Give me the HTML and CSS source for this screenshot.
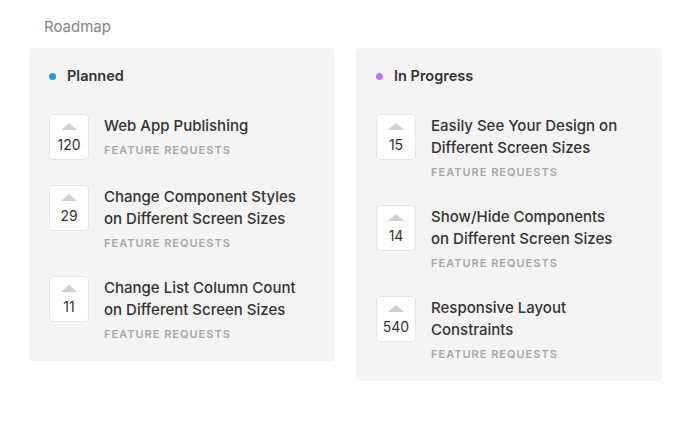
FILE: index.html
```html
<!DOCTYPE html>
<html lang="en">
<head>
    <meta charset="UTF-8">
    <meta name="viewport" content="width=device-width, initial-scale=1.0">
    <title>Roadmap</title>
    <link rel="stylesheet" href="styles.css">
</head>
<body>

    <div class="roadmap">
        <h1 class="roadmap-title">Roadmap</h1>

        <div class="columns">
            <!-- Planned -->
            <div class="column">
                <div class="column-header">
                    <span class="dot dot-planned"></span>
                    <span>Planned</span>
                </div>

                <div class="item">
                    <div class="vote">
                        <span class="arrow"></span>
                        <span class="count">120</span>
                    </div>
                    <div class="item-body">
                        <div class="item-title">Web App Publishing</div>
                        <div class="item-tag">Feature Requests</div>
                    </div>
                </div>

                <div class="item">
                    <div class="vote">
                        <span class="arrow"></span>
                        <span class="count">29</span>
                    </div>
                    <div class="item-body">
                        <div class="item-title">Change Component Styles on Different Screen Sizes</div>
                        <div class="item-tag">Feature Requests</div>
                    </div>
                </div>

                <div class="item">
                    <div class="vote">
                        <span class="arrow"></span>
                        <span class="count">11</span>
                    </div>
                    <div class="item-body">
                        <div class="item-title">Change List Column Count on Different Screen Sizes</div>
                        <div class="item-tag">Feature Requests</div>
                    </div>
                </div>
            </div>

            <!-- In Progress -->
            <div class="column">
                <div class="column-header">
                    <span class="dot dot-progress"></span>
                    <span>In Progress</span>
                </div>

                <div class="item">
                    <div class="vote">
                        <span class="arrow"></span>
                        <span class="count">15</span>
                    </div>
                    <div class="item-body">
                        <div class="item-title">Easily See Your Design on Different Screen Sizes</div>
                        <div class="item-tag">Feature Requests</div>
                    </div>
                </div>

                <div class="item">
                    <div class="vote">
                        <span class="arrow"></span>
                        <span class="count">14</span>
                    </div>
                    <div class="item-body">
                        <div class="item-title">Show/Hide Components on Different Screen Sizes</div>
                        <div class="item-tag">Feature Requests</div>
                    </div>
                </div>

                <div class="item">
                    <div class="vote">
                        <span class="arrow"></span>
                        <span class="count">540</span>
                    </div>
                    <div class="item-body">
                        <div class="item-title">Responsive Layout Constraints</div>
                        <div class="item-tag">Feature Requests</div>
                    </div>
                </div>
            </div>
        </div>
    </div>

</body>
</html>
```
FILE: styles.css
```css
body {
    font-family: Inter, "Noto Sans", sans-serif;
    margin: 0;
    background-color: #fff;
    color: #333;
}

.roadmap {
    padding: 17px 15px 0 29px;
}

.roadmap-title {
    font-size: 15px;
    font-weight: 400;
    color: #858585;
    margin: 0 0 11px 15px;
    line-height: 20px;
}

.columns {
    display: flex;
    align-items: flex-start;
    gap: 21px;
}

.column {
    width: 306px;
    box-sizing: border-box;
    background-color: #f4f4f4;
    border-radius: 4px;
    padding: 18px 20px 19px 20px;
}

.column-header {
    display: flex;
    align-items: center;
    font-size: 14.5px;
    font-weight: 600;
    line-height: 20px;
    color: #333;
    margin-bottom: 28px;
}

.dot {
    width: 7px;
    height: 7px;
    border-radius: 50%;
    margin: 0 11px 0 0;
}

.dot-planned {
    background-color: #1e98f5;
}

.dot-progress {
    background-color: #c474fa;
}

/* Items */
.item {
    display: flex;
    align-items: flex-start;
    margin-bottom: 25px;
}

.item:last-child {
    margin-bottom: 0;
}

.vote {
    width: 40px;
    height: 46px;
    box-sizing: border-box;
    background: #fff;
    border: 1px solid #e6e6e6;
    border-radius: 4px;
    display: flex;
    flex-direction: column;
    align-items: center;
    flex-shrink: 0;
}

.arrow {
    width: 0;
    height: 0;
    border-left: 8px solid transparent;
    border-right: 8px solid transparent;
    border-bottom: 7px solid #d0d0d0;
    margin-top: 8px;
}

.count {
    font-size: 14px;
    line-height: 20px;
    margin-top: 5px;
    color: #333;
}

.item-body {
    margin: 1px 0 0 15px;
    width: 196px;
}

.item-title {
    font-size: 15px;
    font-weight: 500;
    line-height: 22px;
    color: #333;
}

.item-tag {
    font-size: 11px;
    font-weight: 600;
    letter-spacing: 1px;
    text-transform: uppercase;
    color: #a8a8a8;
    line-height: 16px;
    margin-top: 5px;
}
```
